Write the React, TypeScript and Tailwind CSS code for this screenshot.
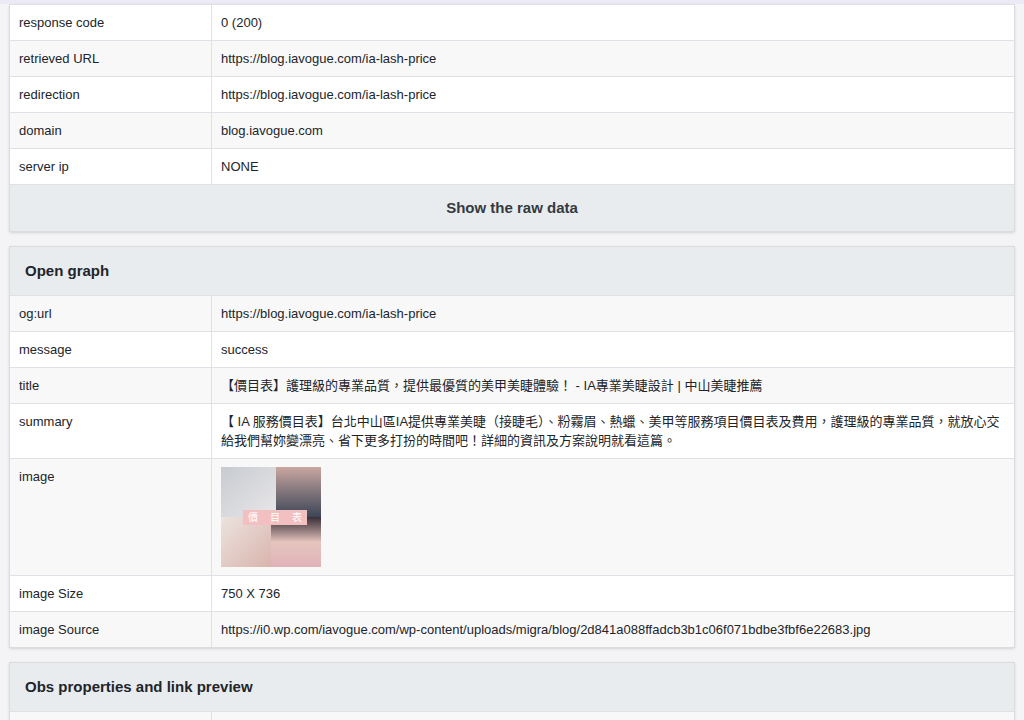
const font = { fontFamily: '"Helvetica Neue", "Liberation Sans", Arial, "Noto Sans CJK TC", sans-serif' };

type Row = { k: string; v: React.ReactNode };

function Table({ rows, startGray }: { rows: Row[]; startGray: boolean }) {
  return (
    <div>
      {rows.map((r, i) => {
        const gray = (i % 2 === 0) === startGray;
        return (
          <div
            key={r.k}
            className={`flex border-t border-[#dee2e6] text-[13px] leading-[19px] text-[#212529] ${gray ? "bg-[#f8f8f9]" : "bg-white"}`}
          >
            <div className="w-[202px] shrink-0 border-r border-[#dee2e6] px-[9px] py-[8px]">{r.k}</div>
            <div className="flex-1 px-[9px] py-[8px]">{r.v}</div>
          </div>
        );
      })}
    </div>
  );
}

function Thumb() {
  return (
    <div className="relative h-[100px] w-[100px] overflow-hidden bg-[#d9d2d4]">
      <div className="absolute left-0 top-0 h-[50px] w-[55px] bg-gradient-to-br from-[#c7cbd0] to-[#e9e7ea]" />
      <div className="absolute right-0 top-0 h-[50px] w-[45px] bg-gradient-to-b from-[#caa7a0] to-[#3d4657]" />
      <div className="absolute bottom-0 left-0 h-[50px] w-[50px] bg-gradient-to-br from-[#ece3df] to-[#d9b4ad]" />
      <div className="absolute bottom-0 right-0 h-[50px] w-[50px] bg-gradient-to-b from-[#3a3038] via-[#e6c5bd] to-[#e0b2b9]" />
      <div className="absolute left-[22px] top-[43px] flex h-[15px] w-[64px] items-center justify-center gap-3 bg-[#f2c0c0] text-[10px] text-white">
        <span>價</span><span>目</span><span>表</span>
      </div>
    </div>
  );
}

function Header({ title }: { title: string }) {
  return (
    <div className="bg-[#e9ecef] px-[15px] py-[14px] text-[15px] font-bold leading-[20px] text-[#212529]">{title}</div>
  );
}

export default function App() {
  return (
    <div className="h-[720px] overflow-hidden bg-[#f4f4f7]" style={font}>
      <div className="h-[4px] bg-[#ebeaf5]" />
      <div className="px-[9px]">
        <div className="overflow-hidden border border-t-0 border-[#dcdcdc] bg-white shadow-sm">
          <Table
            startGray={false}
            rows={[
              { k: "response code", v: "0 (200)" },
              { k: "retrieved URL", v: "https://blog.iavogue.com/ia-lash-price" },
              { k: "redirection", v: "https://blog.iavogue.com/ia-lash-price" },
              { k: "domain", v: "blog.iavogue.com" },
              { k: "server ip", v: "NONE" },
            ]}
          />
          <div className="border-t border-[#dee2e6] bg-[#e9ecef] py-[13px] text-center text-[15px] font-bold leading-[20px] text-[#343a40]">
            Show the raw data
          </div>
        </div>

        <div className="mt-[14px] overflow-hidden border border-[#dcdcdc] bg-white shadow-sm">
          <Header title="Open graph" />
          <Table
            startGray={true}
            rows={[
              { k: "og:url", v: "https://blog.iavogue.com/ia-lash-price" },
              { k: "message", v: "success" },
              { k: "title", v: "【價目表】護理級的專業品質，提供最優質的美甲美睫體驗！ - IA專業美睫設計 | 中山美睫推薦" },
              {
                k: "summary",
                v: "【 IA 服務價目表】台北中山區IA提供專業美睫（接睫毛）、粉霧眉、熱蠟、美甲等服務項目價目表及費用，護理級的專業品質，就放心交給我們幫妳變漂亮、省下更多打扮的時間吧！詳細的資訊及方案說明就看這篇。",
              },
              { k: "image", v: <Thumb /> },
              { k: "image Size", v: "750 X 736" },
              {
                k: "image Source",
                v: "https://i0.wp.com/iavogue.com/wp-content/uploads/migra/blog/2d841a088ffadcb3b1c06f071bdbe3fbf6e22683.jpg",
              },
            ]}
          />
        </div>

        <div className="mt-[14px] overflow-hidden border border-[#dcdcdc] bg-white shadow-sm">
          <Header title="Obs properties and link preview" />
          <div className="flex h-[40px] border-t border-[#dee2e6] bg-[#f8f8f9]">
            <div className="w-[202px] border-r border-[#dee2e6]" />
          </div>
        </div>
      </div>
    </div>
  );
}
